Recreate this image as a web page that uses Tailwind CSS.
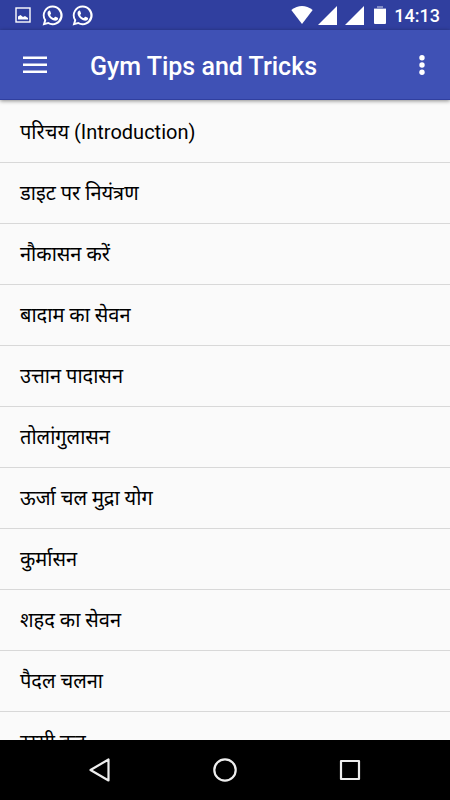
<!DOCTYPE html>
<html lang="hi">
<head>
    <meta charset="UTF-8">
    <meta name="viewport" content="width=device-width, initial-scale=1.0">
    <title>Gym Tips and Tricks</title>
    <script src="https://cdn.jsdelivr.net/npm/@tailwindcss/browser@4"></script>
</head>
<body class="h-screen flex flex-col overflow-hidden bg-[#fafafa] font-[Roboto,'Noto_Sans',sans-serif]">
    <!-- Status bar -->
    <div class="flex h-[30px] shrink-0 items-center justify-between bg-[#303f9f] pl-[15px] pr-[10px] text-white">
        <div class="flex items-center gap-[9px]">
            <svg class="h-4 w-4" viewBox="0 0 16 16" fill="none" aria-hidden="true">
                <rect x="1" y="1" width="14" height="14" stroke="currentColor" stroke-width="1.4"/>
                <path d="M3 12.500V9.500L5.500 8L8 10L10 9L13 11V12.500Z" fill="currentColor"/>
            </svg>
            <svg class="ml-[2px] h-[21px] w-[21px]" viewBox="0 0 24 24" fill="currentColor" aria-hidden="true">
                <path fill-rule="evenodd" d="M12.200 0.500A11.300 11.300 0 0 0 2.500 17.500L0.700 23.500L7 21.800A11.300 11.300 0 1 0 12.200 0.500ZM12.200 2.800A9 9 0 1 1 7.300 19.500L4 20.400L4.900 17.200A9 9 0 0 1 12.200 2.800Z"/>
                <path d="M8.500 6.300C8 6.300 6.300 7.300 6.300 9.500C6.300 11.800 8.200 14 8.500 14.400C9 15 11.700 18 15.200 18C16.700 18 18.300 16.900 18.400 15.400C18.400 14.900 18.300 14.800 18 14.600L15.500 13.400C15.100 13.300 14.900 13.300 14.600 13.700L13.700 14.800C13.400 15 13.200 15 12.900 14.900C11.500 14.200 10.200 13.200 9.400 11.700C9.200 11.400 9.400 11.200 9.500 11L10.300 9.900C10.400 9.600 10.300 9.400 10.200 9.200L9.300 6.900C9.100 6.400 8.900 6.300 8.500 6.300Z"/>
            </svg>
            <svg class="h-[21px] w-[21px]" viewBox="0 0 24 24" fill="currentColor" aria-hidden="true">
                <path fill-rule="evenodd" d="M12.200 0.500A11.300 11.300 0 0 0 2.500 17.500L0.700 23.500L7 21.800A11.300 11.300 0 1 0 12.200 0.500ZM12.200 2.800A9 9 0 1 1 7.300 19.500L4 20.400L4.900 17.200A9 9 0 0 1 12.200 2.800Z"/>
                <path d="M8.500 6.300C8 6.300 6.300 7.300 6.300 9.500C6.300 11.800 8.200 14 8.500 14.400C9 15 11.700 18 15.200 18C16.700 18 18.300 16.900 18.400 15.400C18.400 14.900 18.300 14.800 18 14.600L15.500 13.400C15.100 13.300 14.900 13.300 14.600 13.700L13.700 14.800C13.400 15 13.200 15 12.900 14.900C11.500 14.200 10.200 13.200 9.400 11.700C9.200 11.400 9.400 11.200 9.500 11L10.300 9.900C10.400 9.600 10.300 9.400 10.200 9.200L9.300 6.900C9.100 6.400 8.900 6.300 8.500 6.300Z"/>
            </svg>
        </div>
        <div class="flex items-center">
            <svg class="h-[18px] w-[22px]" viewBox="0 0 22 18" fill="currentColor" aria-hidden="true">
                <path d="M11 18L0.300 4Q11 -4 21.700 4Z"/>
            </svg>
            <svg class="ml-[5px] h-[19px] w-[19px]" viewBox="0 0 19 19" fill="currentColor" aria-hidden="true">
                <path d="M0 19L19 0V19Z"/>
            </svg>
            <svg class="ml-2 h-[19px] w-[19px]" viewBox="0 0 19 19" fill="currentColor" aria-hidden="true">
                <path d="M0 19L19 0V19Z"/>
            </svg>
            <svg class="ml-[10px] h-[18px] w-3" viewBox="0 0 12 18" fill="currentColor" aria-hidden="true">
                <path d="M3 0H9V2H12V3H0V2H3Z" opacity=".4"/>
                <path d="M0 3H12V17Q12 18 11 18H1Q0 18 0 17Z"/>
            </svg>
            <span class="ml-2 pt-[2px] text-[18px] leading-7 font-medium">14:13</span>
        </div>
    </div>

    <!-- App bar -->
    <header class="z-10 flex h-[70px] shrink-0 items-center border-b border-[#303f9f] bg-[#3f51b5] px-[20px] text-white shadow-[0_1px_4px_rgba(0,0,0,0.45)]">
        <button type="button" class="flex h-[30px] w-[30px] items-center justify-center" aria-label="Menu">
            <svg class="h-[18px] w-6" viewBox="0 0 24 18" fill="currentColor" aria-hidden="true">
                <path d="M0 0.500H24V3H0ZM0 7.500H24V10H0ZM0 14.500H24V17H0Z"/>
            </svg>
        </button>
        <h1 class="ml-10 flex-1 pt-1 text-[25px] leading-8 font-medium">Gym Tips and Tricks</h1>
        <button type="button" class="flex h-[30px] w-4 items-center justify-center" aria-label="More options">
            <svg class="h-5 w-[6px]" viewBox="0 0 6 20" fill="currentColor" aria-hidden="true">
                <circle cx="3" cy="2.700" r="2.700"/>
                <circle cx="3" cy="10" r="2.700"/>
                <circle cx="3" cy="17.300" r="2.700"/>
            </svg>
        </button>
    </header>

    <!-- Tips list -->
    <main class="min-h-0 flex-1 overflow-hidden pt-[2px]">
        <ul class="divide-y divide-[#d8d8d8] text-[20px] leading-[60px] text-black">
            <li class="px-5">परिचय (Introduction)</li>
            <li class="px-5">डाइट पर नियंत्रण</li>
            <li class="px-5">नौकासन करें</li>
            <li class="px-5">बादाम का सेवन</li>
            <li class="px-5">उत्तान पादासन</li>
            <li class="px-5">तोलांगुलासन</li>
            <li class="px-5">ऊर्जा चल मुद्रा योग</li>
            <li class="px-5">कुर्मासन</li>
            <li class="px-5">शहद का सेवन</li>
            <li class="px-5">पैदल चलना</li>
            <li class="px-5">रस्सी कूद</li>
        </ul>
    </main>

    <!-- Navigation bar -->
    <nav class="flex h-[60px] shrink-0 items-center justify-center gap-[95px] bg-black text-[#eeeeee]" aria-label="System">
        <button type="button" class="flex h-[30px] w-[30px] items-center justify-center" aria-label="Back">
            <svg class="h-6 w-6" viewBox="0 0 24 24" fill="none" stroke="currentColor" stroke-width="2.200" stroke-linejoin="round" aria-hidden="true">
                <path d="M20.500 1.500V22.500L2.500 12Z"/>
            </svg>
        </button>
        <button type="button" class="flex h-[30px] w-[30px] items-center justify-center" aria-label="Home">
            <svg class="h-6 w-6" viewBox="0 0 24 24" fill="none" stroke="currentColor" stroke-width="2.200" aria-hidden="true">
                <circle cx="12" cy="12" r="10.700"/>
            </svg>
        </button>
        <button type="button" class="flex h-[30px] w-[30px] items-center justify-center" aria-label="Recent apps">
            <svg class="h-6 w-6" viewBox="0 0 24 24" fill="none" stroke="currentColor" stroke-width="2.200" stroke-linejoin="round" aria-hidden="true">
                <rect x="3" y="3" width="18" height="18"/>
            </svg>
        </button>
    </nav>
</body>
</html>
